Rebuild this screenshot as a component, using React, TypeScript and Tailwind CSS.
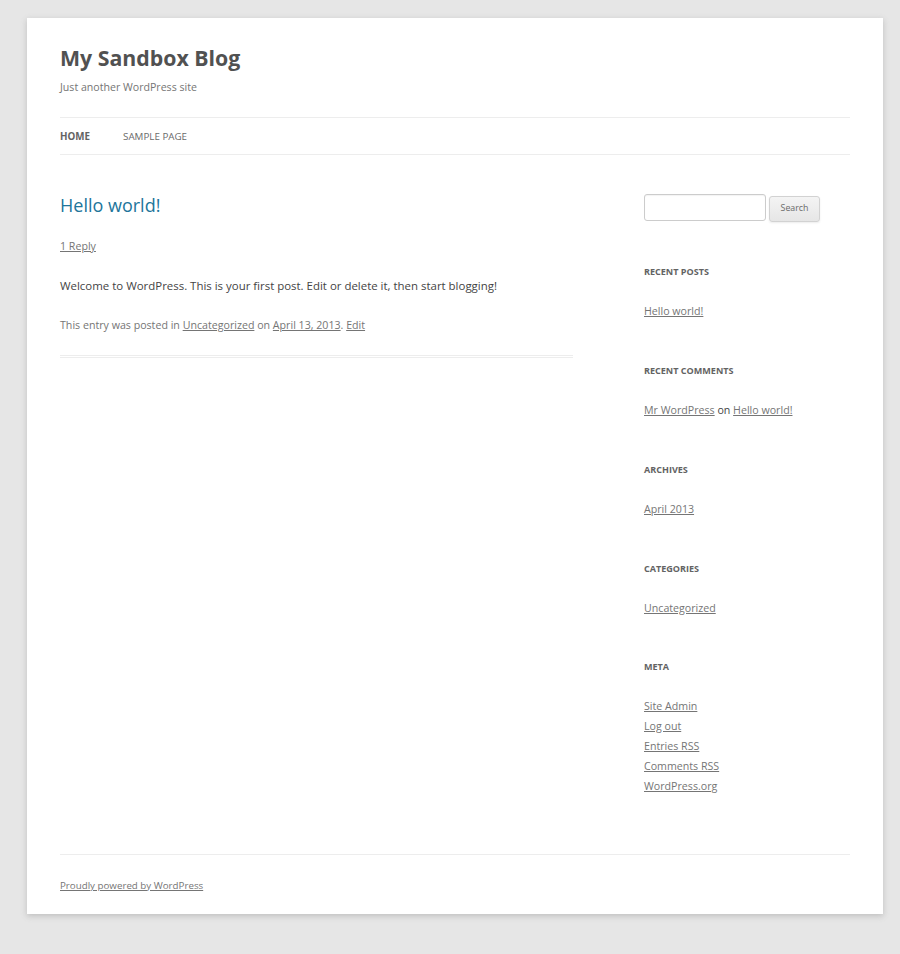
import React from "react";

const font = { fontFamily: '"Open Sans", "Noto Sans", Arial, sans-serif' };

function Widget({ title, children, mb }: { title: string; children: React.ReactNode; mb: string }) {
  return (
    <section className={mb}>
      <h3 className="text-[9.05px] leading-[20px] font-bold uppercase text-[#636363] mb-[19px]">{title}</h3>
      {children}
    </section>
  );
}

const linkCls = "text-[#757575] underline";

export default function App() {
  return (
    <div className="min-h-[954px] bg-[#e6e6e6] pt-[18px] pb-[40px]" style={font}>
      <div className="ml-[27px] w-[856px] bg-white px-[33px] shadow-[0_2px_6px_rgba(100,100,100,0.3)]">
        <header className="pt-[24px]">
          <h1 className="text-[21.3px] leading-[31px] font-bold text-[#515151]">My Sandbox Blog</h1>
          <p className="mt-[2px] text-[10.6px] leading-[24px] text-[#757575]">Just another WordPress site</p>
        </header>

        <nav className="mt-[18px] h-[38px] border-y border-[#ededed] flex items-center">
          <span className="text-[9.8px] leading-[35px] font-bold uppercase text-[#636363]">Home</span>
          <span className="ml-[33px] text-[9.8px] leading-[35px] uppercase text-[#6a6a6a]">Sample Page</span>
        </nav>

        <div className="mt-[38px] flex justify-between">
          <main className="w-[513px]">
            <article className="pb-[18px] border-b-[3px] border-double border-[#ededed]">
              <h2 className="text-[18px] leading-[24px] font-normal text-[#21759b]">Hello world!</h2>
              <div className="mt-[17px] text-[10.65px] leading-[24px]">
                <a className={linkCls}>1 Reply</a>
              </div>
              <p className="mt-[16px] text-[11.45px] leading-[24px] text-[#444]">
                Welcome to WordPress. This is your first post. Edit or delete it, then start blogging!
              </p>
              <footer className="mt-[15px] text-[10.65px] leading-[24px] text-[#757575]">
                This entry was posted in <a className={linkCls}>Uncategorized</a> on{" "}
                <a className={linkCls}>April 13, 2013</a>. <a className={linkCls}>Edit</a>
              </footer>
            </article>
          </main>

          <aside className="w-[206px] pt-[1px]">
            <form className="flex items-start mb-[40px]">
              <input
                type="text"
                className="w-[122px] h-[27px] border border-[#ccc] rounded-[3px] bg-white shadow-[inset_0_1px_1px_rgba(0,0,0,0.05)]"
              />
              <button
                type="button"
                className="ml-[3px] mt-[2px] w-[51px] h-[26px] text-[8.8px] text-[#6a6a6a] border border-[#d2d2d2] rounded-[3px] bg-gradient-to-b from-[#f4f4f4] to-[#e6e6e6] shadow-[0_1px_2px_rgba(64,64,64,0.1)]"
              >
                Search
              </button>
            </form>

            <div className="text-[10.65px] leading-[20px]">
              <Widget title="Recent Posts" mb="mb-[40px]">
                <a className={linkCls}>Hello world!</a>
              </Widget>
              <Widget title="Recent Comments" mb="mb-[40px]">
                <div className="text-[#444]">
                  <a className={linkCls}>Mr WordPress</a> on <a className={linkCls}>Hello world!</a>
                </div>
              </Widget>
              <Widget title="Archives" mb="mb-[40px]">
                <a className={linkCls}>April 2013</a>
              </Widget>
              <Widget title="Categories" mb="mb-[39px]">
                <a className={linkCls}>Uncategorized</a>
              </Widget>
              <Widget title="Meta" mb="">
                <ul>
                  <li><a className={linkCls}>Site Admin</a></li>
                  <li><a className={linkCls}>Log out</a></li>
                  <li><a className={linkCls}>Entries RSS</a></li>
                  <li><a className={linkCls}>Comments RSS</a></li>
                  <li><a className={linkCls}>WordPress.org</a></li>
                </ul>
              </Widget>
            </div>
          </aside>
        </div>

        <footer className="mt-[58px] border-t border-[#ededed] pt-[19px] pb-[16px] text-[9.75px] leading-[24px]">
          <a className={linkCls}>Proudly powered by WordPress</a>
        </footer>
      </div>
    </div>
  );
}
